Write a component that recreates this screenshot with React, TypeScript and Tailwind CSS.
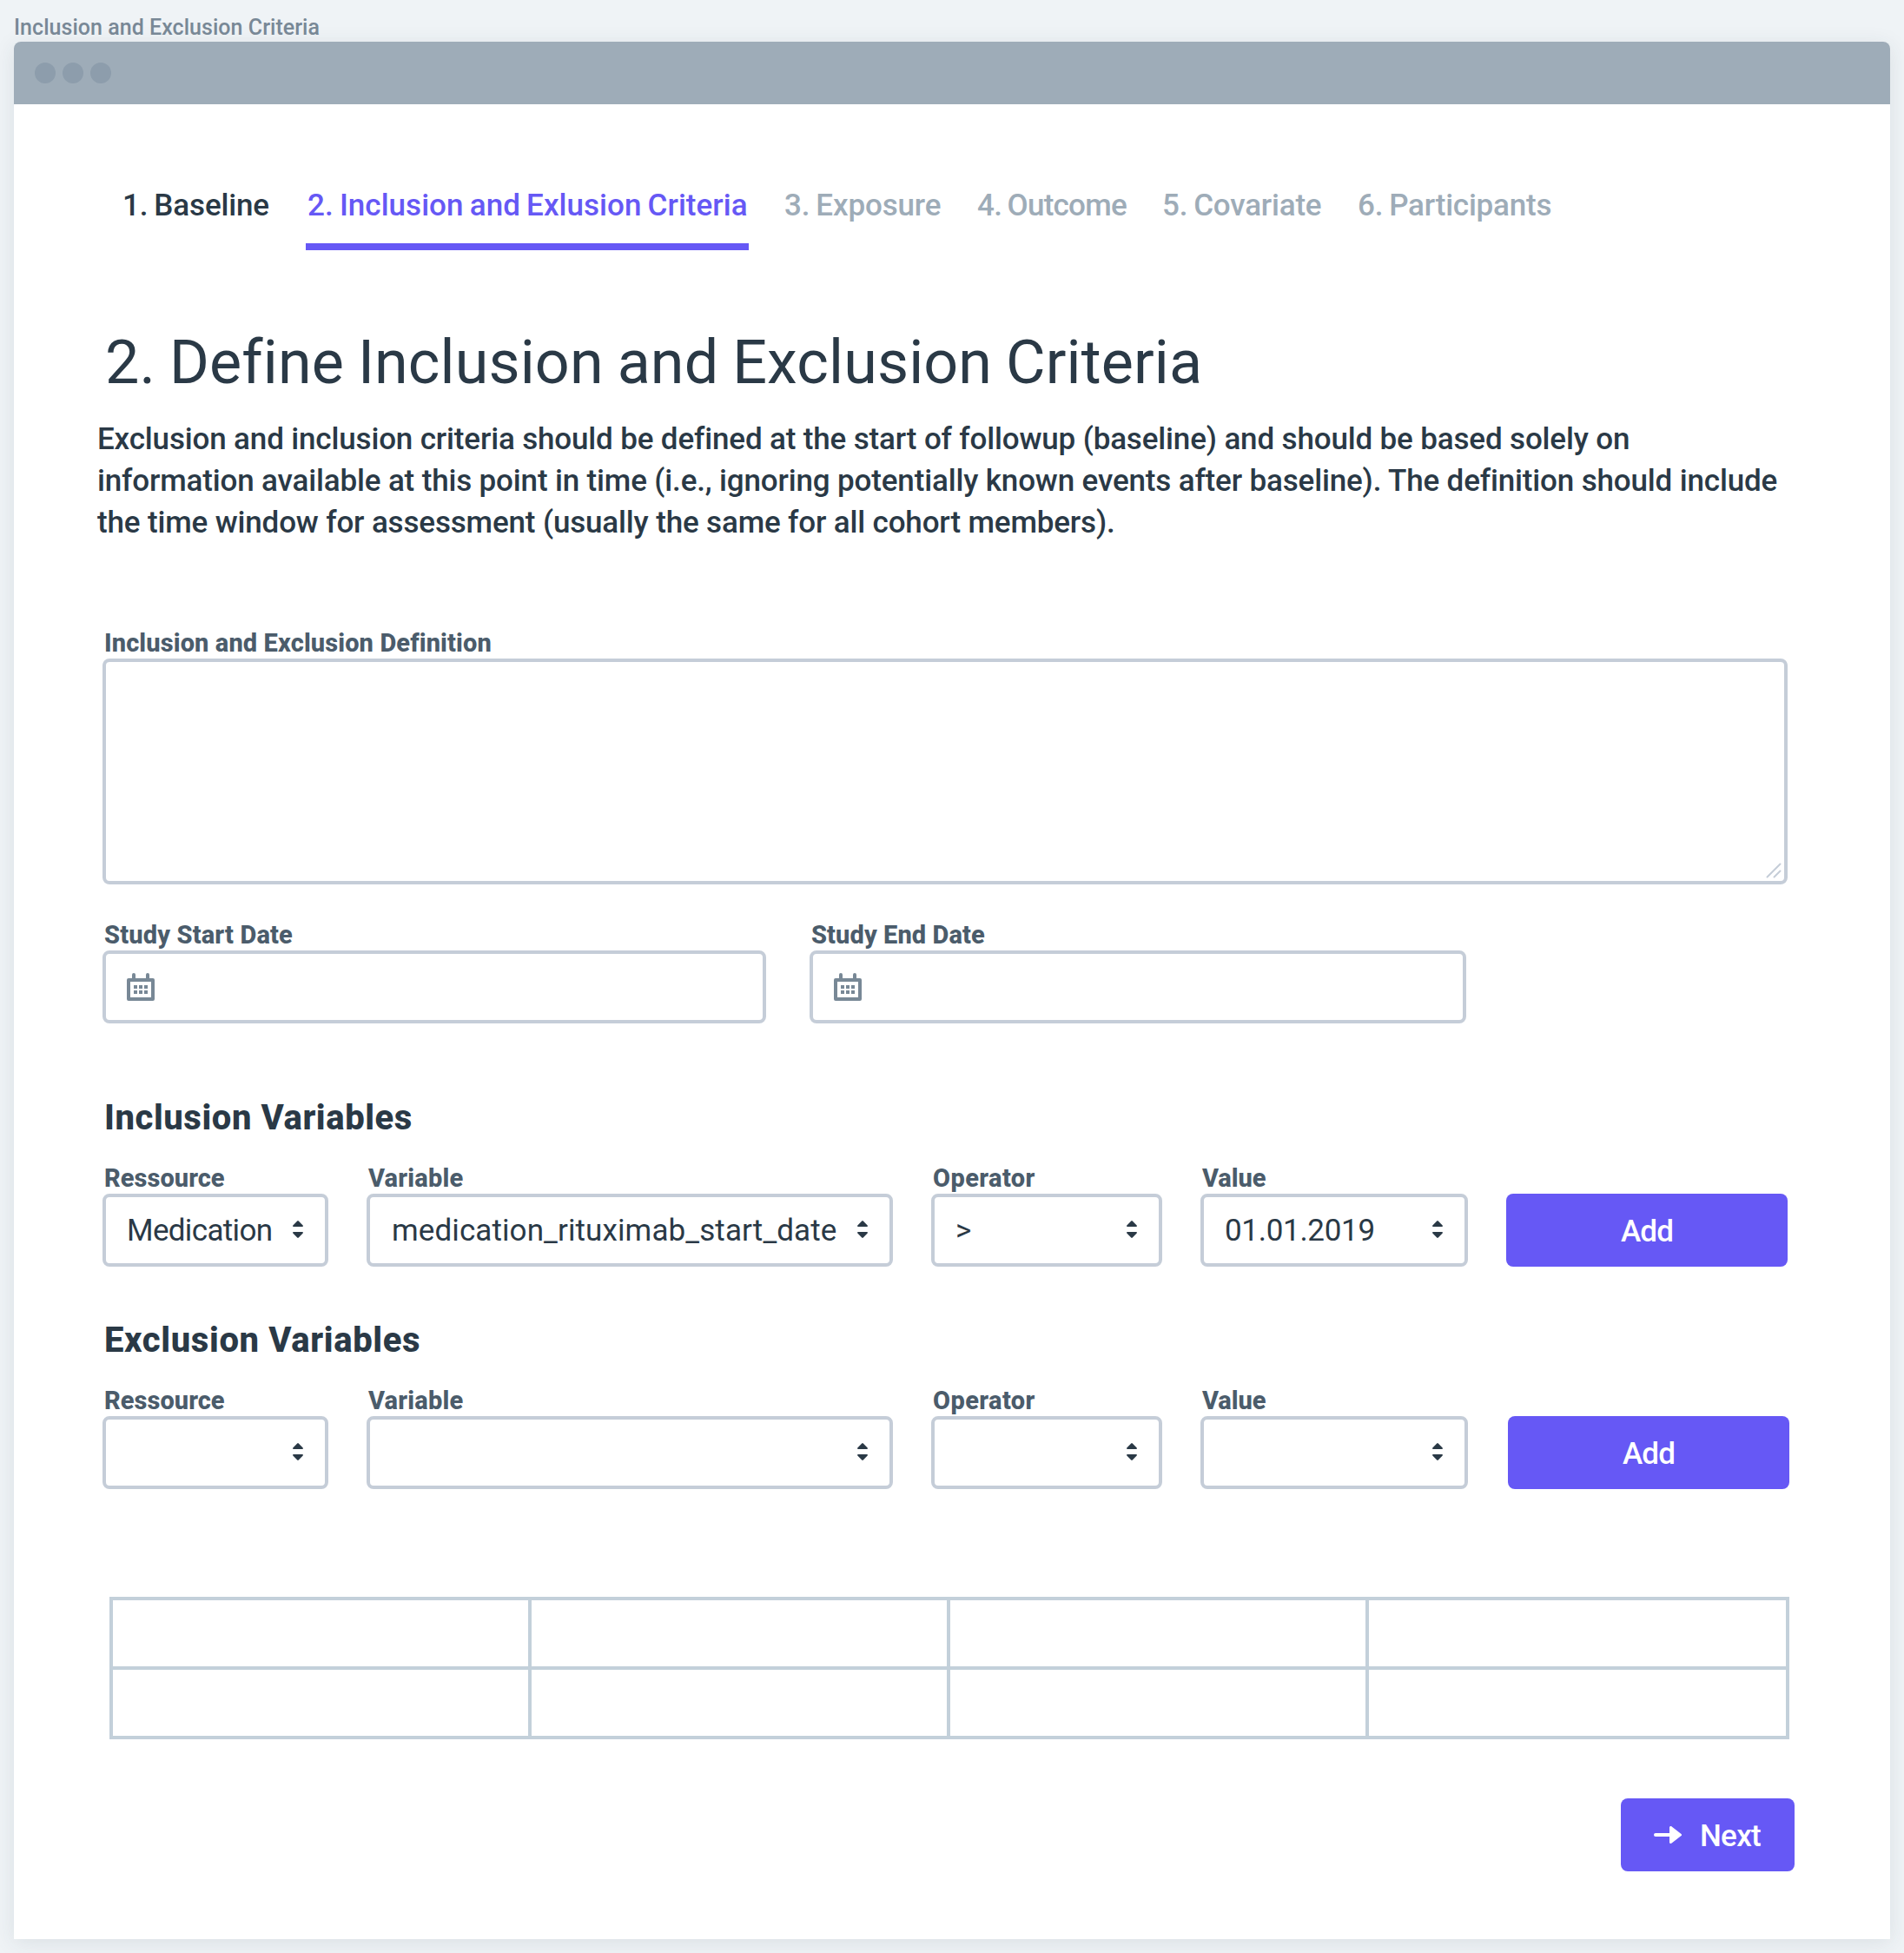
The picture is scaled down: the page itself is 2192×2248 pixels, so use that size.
import type { ReactNode } from "react";

function Calendar() {
  return (
    <svg viewBox="0 0 32 32" className="size-8 shrink-0" fill="#788896">
      <path fillRule="evenodd" d="M2 6h28a2 2 0 0 1 2 2v22a2 2 0 0 1-2 2H2a2 2 0 0 1-2-2V8a2 2 0 0 1 2-2ZM4 10v18h24V10Z" />
      <path d="M6 7V2a2 2 0 0 1 4 0v5ZM22 7V2a2 2 0 0 1 4 0v5Z" />
      <path d="M8 14h4v4H8ZM14 14h4v4h-4ZM20 14h4v4h-4ZM8 20h4v4H8ZM14 20h4v4h-4ZM20 20h4v4h-4Z" />
    </svg>
  );
}

function Carets() {
  return (
    <svg viewBox="0 0 12 20" className="mb-0.5 h-5 w-3 shrink-0" fill="#2a3946">
      <path d="M5.2.5a1.1 1.1 0 0 1 1.6 0L11.7 5.6C12.2 6.2 11.9 7 11.1 7H.9C.1 7-.2 6.2.3 5.6Z" />
      <path d="M5.2 19.5a1.1 1.1 0 0 0 1.6 0L11.7 14.4C12.2 13.8 11.9 13 11.1 13H.9C.1 13-.2 13.8.3 14.4Z" />
    </svg>
  );
}

function Arrow() {
  return (
    <svg viewBox="0 0 32 20" className="h-5 w-8 shrink-0" fill="#fff">
      <path d="M2 8h16V1.600C18 .2 19.500-.4 20.600.5L31.200 8.700a1.600 1.600 0 0 1 0 2.600L20.600 19.500c-1.100.9-2.600.3-2.600-1.100V12H2a2 2 0 0 1 0-4Z" />
    </svg>
  );
}

const box = "flex h-21 items-center rounded-lg border-4 border-[#c5cdd8] bg-white";

function Field({ label, labelClass, className, children }: { label: string; labelClass: string; className: string; children: ReactNode }) {
  return (
    <div className={className}>
      <div className={`h-9 whitespace-nowrap pl-0.5 text-[29px] leading-9 font-extrabold text-[#4b5c6b] ${labelClass}`}>{label}</div>
      {children}
    </div>
  );
}

function Select({ value, className = "" }: { value?: string; className?: string }) {
  return (
    <div className={`${box} justify-between pr-[25px] pl-6`}>
      <span className={`whitespace-nowrap pt-0.5 text-[35px] leading-12 text-[#2a3946] ${className}`}>{value}</span>
      <Carets />
    </div>
  );
}

type RowValues = { resource?: string; variable?: string; operator?: string; value?: string };

function VariableRow({ title, titleClass, values = {}, buttonClass }: { title: string; titleClass: string; values?: RowValues; buttonClass: string }) {
  return (
    <section className="h-64 pt-px">
      <h2 className={`pl-0.5 text-[40px] leading-12 font-extrabold text-[#2a3946] ${titleClass}`}>{title}</h2>
      <div className="mt-[27px] flex items-end">
        <Field label="Ressource" labelClass="tracking-[0.04px]" className="w-65">
          <Select value={values.resource} className="tracking-[-0.661px]" />
        </Field>
        <Field label="Variable" labelClass="tracking-[0.2px]" className="ml-11 w-[606px]">
          <Select value={values.variable} className="pl-px tracking-[0.1px]" />
        </Field>
        <Field label="Operator" labelClass="tracking-[0.4px]" className="ml-11 w-[266px]">
          <Select value={values.operator} />
        </Field>
        <Field label="Value" labelClass="tracking-[-0.083px]" className="ml-11 w-77">
          <Select value={values.value} className="tracking-[-0.3px]" />
        </Field>
        <button className={`h-21 w-81 rounded-lg bg-[#6658f5] pt-1 text-[35px] leading-12 font-medium tracking-[-0.9px] text-white ${buttonClass}`}>Add</button>
      </div>
    </section>
  );
}

export default function App() {
  return (
    <div className="h-[2248px] w-[2192px] overflow-hidden bg-[#eff3f6] px-4 font-['Roboto','Liberation_Sans',sans-serif]">
      <div className="h-12 pt-4 text-[25px] leading-8 font-medium tracking-[0.037px] text-[#788896]">Inclusion and Exclusion Criteria</div>
      <div className="h-[2184px] rounded-t-lg bg-white shadow-[0_4px_24px_rgba(40,57,70,0.1)]">
        <header className="flex h-18 items-center gap-2 rounded-t-lg bg-[#9eacb8] pl-6">
          <span className="size-6 rounded-full bg-[#8d9dac]" />
          <span className="size-6 rounded-full bg-[#8d9dac]" />
          <span className="size-6 rounded-full bg-[#8d9dac]" />
        </header>

        <main className="pt-[93px] pl-[102px]">
          <nav className="ml-[23px] flex whitespace-nowrap text-[35px] leading-12 font-medium text-[#9eacb8] [word-spacing:-1.5px]">
            <a className="w-[211px] tracking-[-0.15px] text-[#2a3946]">1. Baseline</a>
            <div className="w-[551px]">
              <a className="block h-[75px] w-[510px] border-b-8 border-[#6658f5] pl-0.5 tracking-[0.03px] text-[#6658f5]">2. Inclusion and Exlusion Criteria</a>
            </div>
            <a className="w-[222px] tracking-[-0.15px]">3. Exposure</a>
            <a className="w-[213px] tracking-[-0.75px]">4. Outcome</a>
            <a className="w-[225px] tracking-[-0.2px]">5. Covariate</a>
            <a className="tracking-[-0.22px]">6. Participants</a>
          </nav>

          <h1 className="mt-[87px] pl-[3px] text-[70px] leading-21 tracking-[0.12px] text-[#2a3946] [word-spacing:-1.5px]">2. Define Inclusion and Exclusion Criteria</h1>
          <p className="mt-[23px] -ml-1.5 whitespace-nowrap text-[35px] leading-12 font-medium tracking-[-0.155px] text-[#2a3946]">
            Exclusion and inclusion criteria should be defined at the start of followup (baseline) and should be based solely on
            <br />
            information available at this point in time (i.e., ignoring potentially known events after baseline). The definition should include
            <br />
            the time window for assessment (usually the same for all cohort members).
          </p>

          <Field label="Inclusion and Exclusion Definition" labelClass="tracking-[0.11px]" className="mt-24 w-[1940px]">
            <div className="flex h-65 items-end justify-end rounded-lg border-4 border-[#c5cdd8] pr-1 pb-1">
              <svg viewBox="0 0 16 16" className="size-4 overflow-visible" stroke="#c5cdd8" strokeWidth="2" strokeLinecap="round">
                <path d="M.5 15.500 15.500.5M8.500 15.500 15.500 8.500" />
              </svg>
            </div>
          </Field>

          <div className="mt-10 flex">
            <Field label="Study Start Date" labelClass="tracking-[0.16px]" className="w-191">
              <div className={`${box} pl-6`}><Calendar /></div>
            </Field>
            <Field label="Study End Date" labelClass="tracking-[0.09px]" className="ml-[50px] w-[756px]">
              <div className={`${box} pl-6`}><Calendar /></div>
            </Field>
          </div>

          <div className="mt-21">
            <VariableRow
              title="Inclusion Variables"
              titleClass="tracking-[0.57px]"
              values={{ resource: "Medication", variable: "medication_rituximab_start_date", operator: ">", value: "01.01.2019" }}
              buttonClass="ml-11"
            />
            <VariableRow title="Exclusion Variables" titleClass="tracking-[0.63px]" buttonClass="ml-[46px]" />
          </div>

          <div className="mt-16 ml-2 grid h-41 w-[1934px] grid-cols-[478px_478px_478px_480px] grid-rows-2 gap-1 border-4 border-[#c3d0da] bg-[#c3d0da]">
            {Array.from({ length: 8 }, (_, i) => (
              <div key={i} className="bg-white" />
            ))}
          </div>

          <button className="mt-17 ml-[1748px] flex h-21 w-50 items-center rounded-lg bg-[#6658f5] pl-[38px] text-[35px] leading-12 font-medium text-white">
            <Arrow />
            <span className="ml-[21px] pt-1 tracking-[-0.727px]">Next</span>
          </button>
        </main>
      </div>
    </div>
  );
}
